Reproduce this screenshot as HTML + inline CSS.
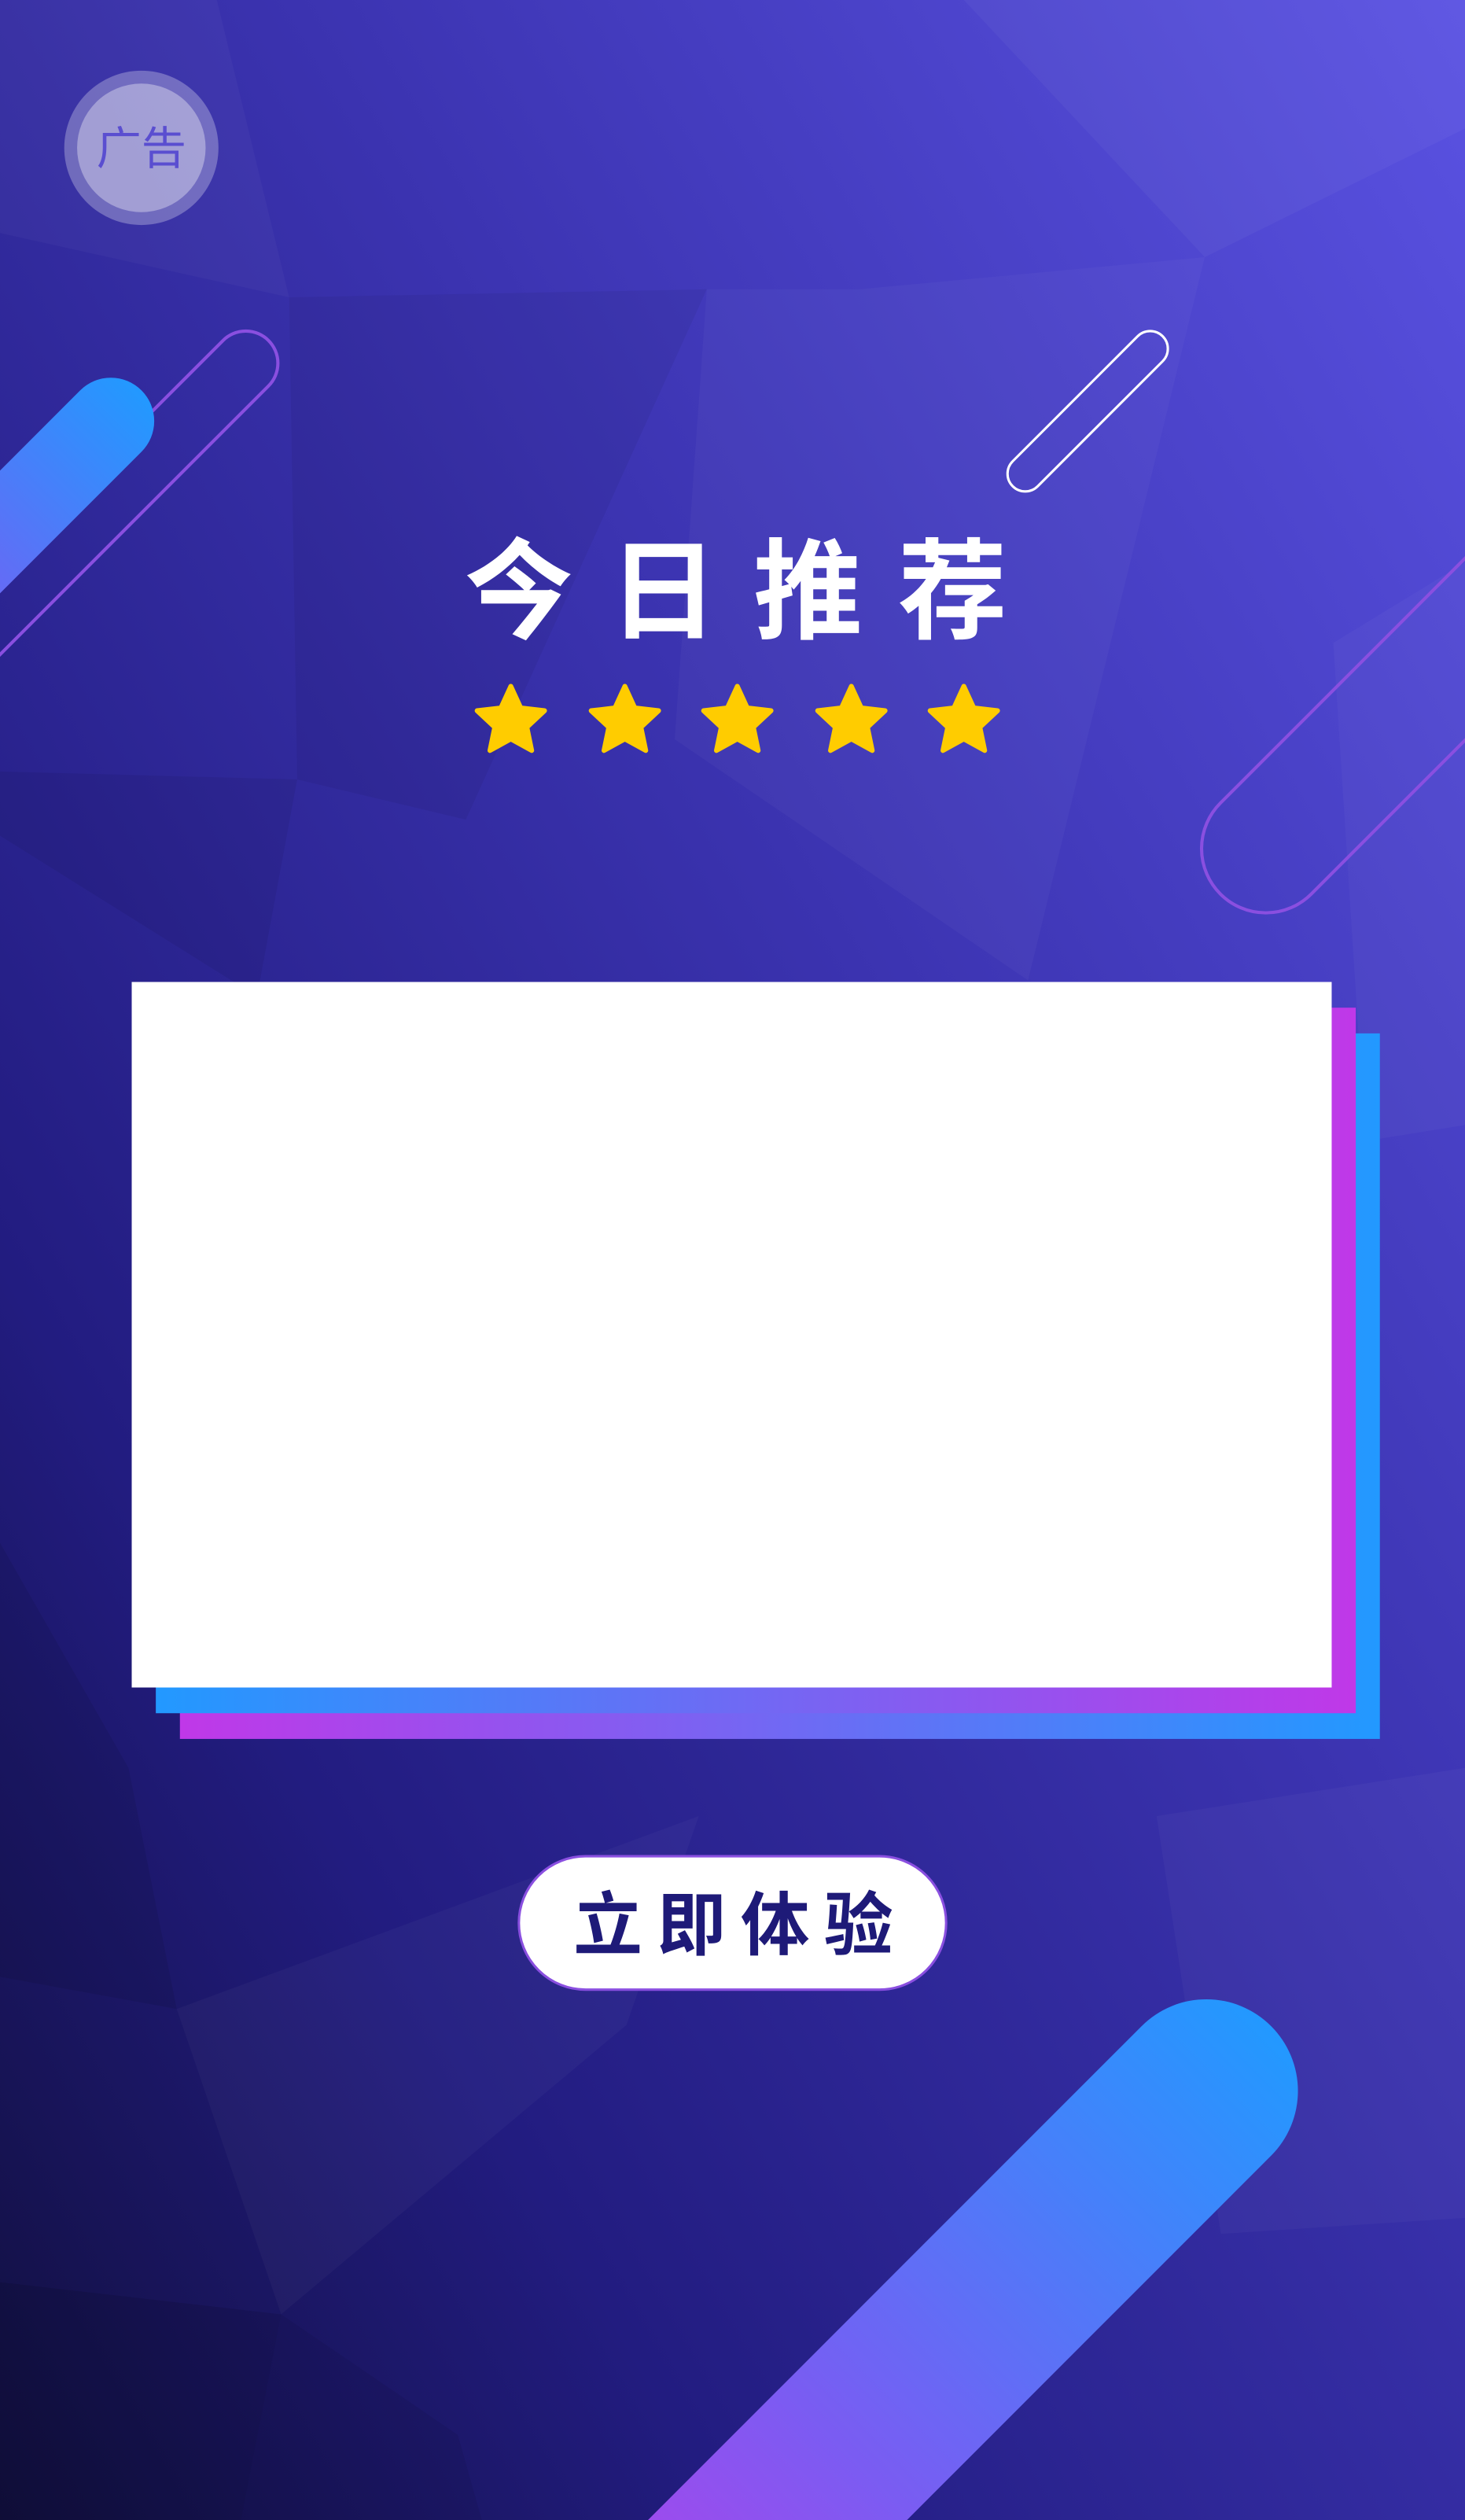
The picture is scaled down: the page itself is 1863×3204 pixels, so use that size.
<!DOCTYPE html>
<html><head><meta charset="utf-8">
<style>
html,body{margin:0;padding:0;width:1863px;height:3204px;overflow:hidden;background:#2a2590;}
svg{display:block;overflow:hidden;}
text{font-family:"Liberation Sans","Noto Sans CJK SC",sans-serif;}
</style></head>
<body>
<svg width="1863" height="3204" viewBox="0 0 912 1568" preserveAspectRatio="none" overflow="hidden" xmlns="http://www.w3.org/2000/svg">
<defs>
<clipPath id="cp"><rect width="912" height="1568"/></clipPath>
<linearGradient id="bg" x1="1" y1="0" x2="0" y2="1">
<stop offset="0" stop-color="#5a52e2"/>
<stop offset="0.4" stop-color="#3b33b0"/>
<stop offset="0.75" stop-color="#221c80"/>
<stop offset="1" stop-color="#110f3e"/>
</linearGradient>
<linearGradient id="pillA" x1="0" y1="0" x2="1" y2="0">
<stop offset="0" stop-color="#2299ff"/>
<stop offset="1" stop-color="#7a5cf2"/>
</linearGradient>
<linearGradient id="pillB" x1="0" y1="0" x2="1" y2="0">
<stop offset="0" stop-color="#2299ff"/>
<stop offset="0.6" stop-color="#7a5cf2"/>
<stop offset="1" stop-color="#c03ae8"/>
</linearGradient>
<linearGradient id="l3" x1="0" y1="0" x2="1" y2="0">
<stop offset="0" stop-color="#c038e8"/>
<stop offset="1" stop-color="#2299ff"/>
</linearGradient>
<linearGradient id="l2" x1="0" y1="0" x2="1" y2="0">
<stop offset="0" stop-color="#2299ff"/>
<stop offset="1" stop-color="#c038e8"/>
</linearGradient>
</defs>
<g clip-path="url(#cp)">
<rect width="912" height="1568" fill="url(#bg)"/>
<polygon points="0,0 135,0 180,185 0,145" fill="#ffffff" opacity="0.03"/>
<polygon points="180,185 440,180 290,510 185,485" fill="#000" opacity="0.05"/>
<polygon points="440,180 535,180 750,160 640,610 420,460" fill="#fff" opacity="0.03"/>
<polygon points="600,0 912,0 912,80 750,160" fill="#fff" opacity="0.04"/>
<polygon points="0,480 185,485 160,620 0,520" fill="#000" opacity="0.06"/>
<polygon points="0,960 80,1100 110,1250 0,1230" fill="#000" opacity="0.08"/>
<polygon points="110,1250 435,1130 390,1260 175,1440" fill="#fff" opacity="0.03"/>
<polygon points="0,1420 175,1440 150,1568 0,1568" fill="#000" opacity="0.1"/>
<polygon points="175,1440 285,1515 300,1568 150,1568" fill="#000" opacity="0.06"/>
<polygon points="720,1130 912,1100 912,1380 760,1390" fill="#fff" opacity="0.03"/>
<polygon points="830,400 912,350 912,700 850,710" fill="#fff" opacity="0.03"/>

<g transform="translate(153,226) rotate(135)">
<rect x="-20" y="-20" width="420" height="40" rx="20" fill="none" stroke="#8a4fe0" stroke-width="2"/>
</g>
<g transform="translate(69,262) rotate(135)">
<rect x="-27" y="-27" width="200" height="54" rx="27" fill="url(#pillA)"/>
</g>
<g transform="translate(716,217) rotate(135)">
<rect x="-11" y="-11" width="132" height="22" rx="11" fill="none" stroke="#ffffff" stroke-width="1.5"/>
</g>
<g transform="translate(788,528) rotate(-45)">
<rect x="-40" y="-40" width="420" height="80" rx="40" fill="none" stroke="#8a4fe0" stroke-width="2"/>
</g>
<g transform="translate(751,1301) rotate(135)">
<rect x="-57" y="-57" width="620" height="114" rx="57" fill="url(#pillB)"/>
</g>

<circle cx="88" cy="92" r="48" fill="#ffffff" opacity="0.28"/>
<circle cx="88" cy="92" r="40" fill="#ffffff" opacity="0.35"/>
<text x="88" y="102" font-size="28" fill="#5a4ed0" text-anchor="middle">广告</text>

<text x="469" y="392" font-size="68" font-weight="bold" fill="#ffffff" text-anchor="middle" letter-spacing="22">今日推荐</text>

<g fill="#ffcc00" stroke="#ffcc00" stroke-width="3" stroke-linejoin="round">
<path d="M0,-22 L6.2,-8.5 L21,-6.8 L10,3.5 L13,18 L0,10.8 L-13,18 L-10,3.5 L-21,-6.8 L-6.2,-8.5 Z" transform="translate(318,449)"/>
<path d="M0,-22 L6.2,-8.5 L21,-6.8 L10,3.5 L13,18 L0,10.8 L-13,18 L-10,3.5 L-21,-6.8 L-6.2,-8.5 Z" transform="translate(389,449)"/>
<path d="M0,-22 L6.2,-8.5 L21,-6.8 L10,3.5 L13,18 L0,10.8 L-13,18 L-10,3.5 L-21,-6.8 L-6.2,-8.5 Z" transform="translate(459,449)"/>
<path d="M0,-22 L6.2,-8.5 L21,-6.8 L10,3.5 L13,18 L0,10.8 L-13,18 L-10,3.5 L-21,-6.8 L-6.2,-8.5 Z" transform="translate(530,449)"/>
<path d="M0,-22 L6.2,-8.5 L21,-6.8 L10,3.5 L13,18 L0,10.8 L-13,18 L-10,3.5 L-21,-6.8 L-6.2,-8.5 Z" transform="translate(600,449)"/>
</g>

<rect x="112" y="643" width="747" height="439" fill="url(#l3)"/>
<rect x="97" y="627" width="747" height="439" fill="url(#l2)"/>
<rect x="82" y="611" width="747" height="439" fill="#ffffff"/>

<rect x="323" y="1155" width="266" height="83" rx="41.5" fill="#ffffff" stroke="#8a4fe0" stroke-width="1.5"/>
<text x="461" y="1213" font-size="43" font-weight="bold" fill="#1e1a78" text-anchor="middle" letter-spacing="9">立即体验</text>
</g>
</svg>
</body></html>
